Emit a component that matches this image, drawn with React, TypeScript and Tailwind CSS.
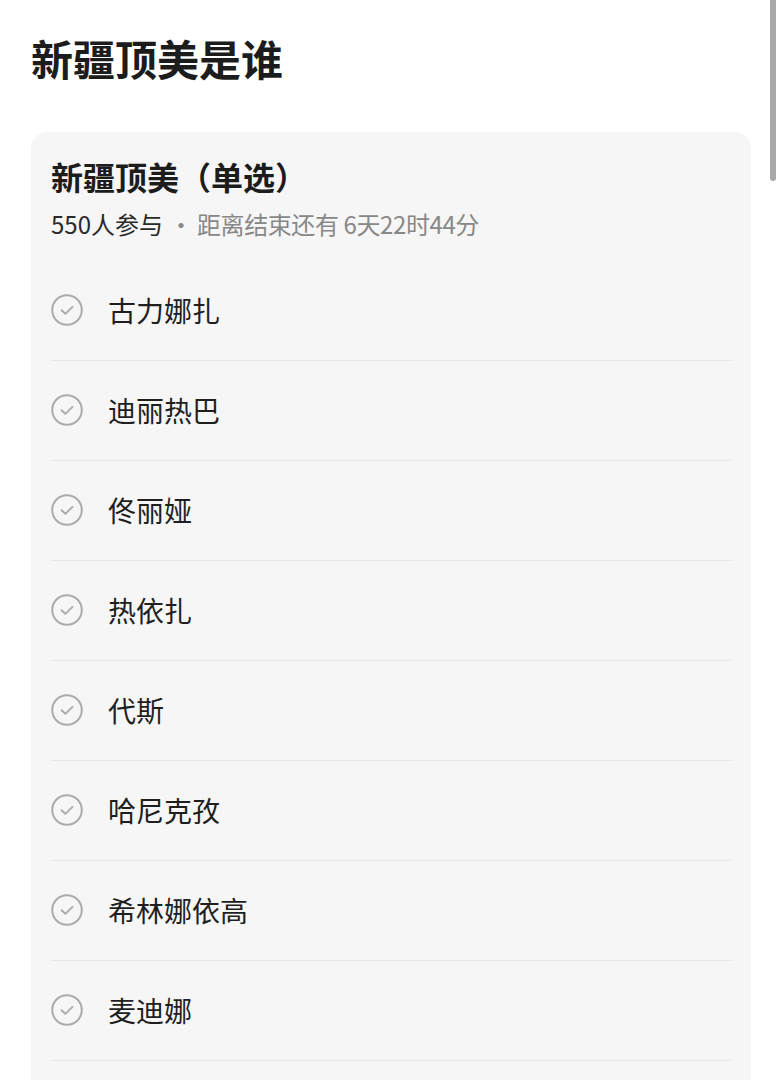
import React from 'react';

const options = ['古力娜扎', '迪丽热巴', '佟丽娅', '热依扎', '代斯', '哈尼克孜', '希林娜依高', '麦迪娜'];

const CheckCircle = () => (
  <svg width="32" height="32" viewBox="0 0 32 32" fill="none" className="shrink-0">
    <circle cx="16" cy="16" r="14.8" stroke="#ababab" strokeWidth="2" />
    <path d="M10.6 16.2 L14.4 19.8 L21.4 12.8" stroke="#ababab" strokeWidth="1.9" strokeLinecap="round" strokeLinejoin="round" />
  </svg>
);

const App = () => {
  return (
    <div
      className="relative h-[1080px] w-full overflow-hidden bg-white"
      style={{ fontFamily: '"Noto Sans CJK SC", "Noto Sans", sans-serif' }}
    >
      <div className="px-[31px] pt-[33px]">
        <h1 className="text-[42px] leading-[50px] font-bold text-[#1c1c1c]">新疆顶美是谁</h1>

        <div className="mt-[49px] rounded-[16px] bg-[#f6f6f6] px-[20px] pt-[25px] pb-10">
          <h2 className="text-[32px] leading-[38px] font-bold text-[#1c1c1c]">新疆顶美（单选）</h2>
          <p className="mt-[14px] text-[24px] leading-[30px] text-[#888888]">
            <span className="text-[#2a2a2a]">550人参与</span>
            <span className="ml-[6px] mr-[4px]">·</span>
            <span className="tracking-[-0.4px]">距离结束还有 6天22时44分</span>
          </p>

          <ul className="mt-[22px]">
            {options.map(name => (
              <li key={name} className="flex h-[100px] items-center gap-[25px] border-b border-[#e6e6e6] pb-[2px]">
                <CheckCircle />
                <span className="text-[28px] leading-[36px] text-[#1f1f1f]">{name}</span>
              </li>
            ))}
          </ul>
        </div>
      </div>

      {/* overlay scroll indicator */}
      <div className="absolute right-[6px] top-0 h-[181px] w-[6px] rounded-b-full bg-[#a8a8a8]" />
    </div>
  );
};

export default App;
